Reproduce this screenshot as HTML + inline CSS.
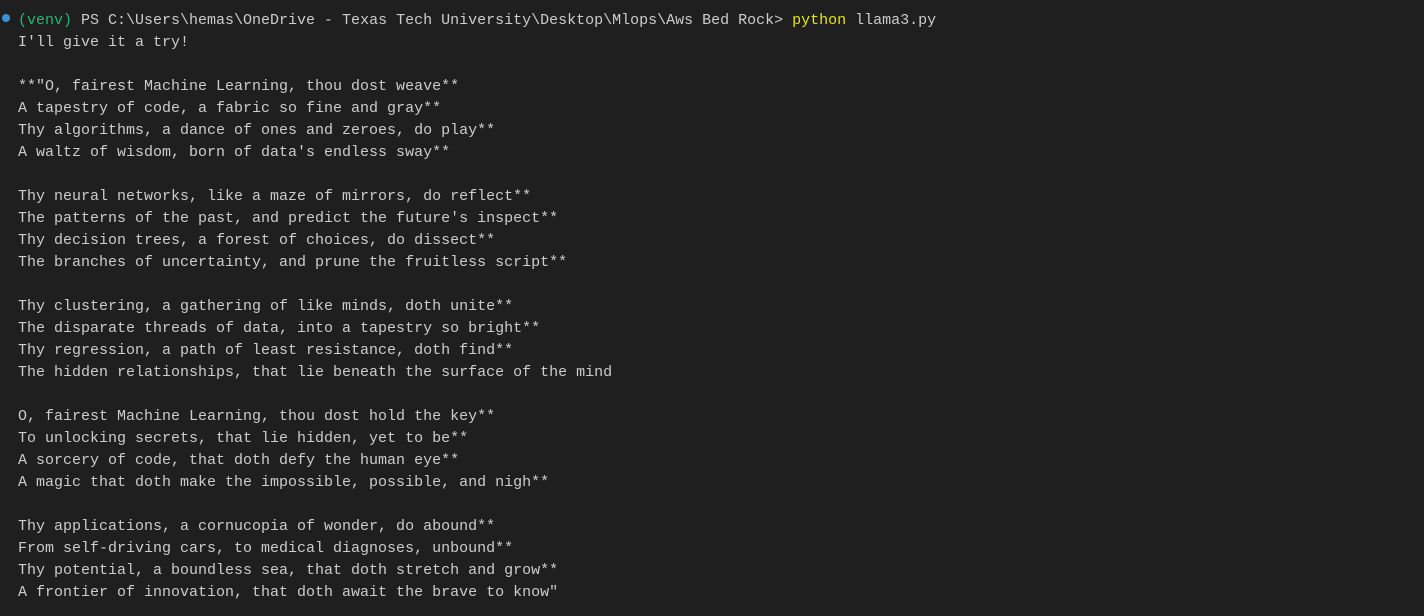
<!DOCTYPE html>
<html><head><meta charset="utf-8"><style>
html,body{margin:0;padding:0;background:#1f1f1f;width:1424px;height:616px;overflow:hidden}
pre{margin:0;position:absolute;left:18px;top:10px;font-family:"Liberation Mono",monospace;font-size:15px;line-height:22px;color:#cccccc;white-space:pre}
.g{color:#23b86f}.y{color:#e5e510}
.dot{position:absolute;left:2px;top:14px;width:8px;height:8px;border-radius:50%;background:#3794d8}
</style></head><body>
<div class="dot"></div>
<pre><span class="g">(venv)</span> PS C:\Users\hemas\OneDrive - Texas Tech University\Desktop\Mlops\Aws Bed Rock&gt; <span class="y">python</span> llama3.py
I'll give it a try!

**"O, fairest Machine Learning, thou dost weave**
A tapestry of code, a fabric so fine and gray**
Thy algorithms, a dance of ones and zeroes, do play**
A waltz of wisdom, born of data's endless sway**

Thy neural networks, like a maze of mirrors, do reflect**
The patterns of the past, and predict the future's inspect**
Thy decision trees, a forest of choices, do dissect**
The branches of uncertainty, and prune the fruitless script**

Thy clustering, a gathering of like minds, doth unite**
The disparate threads of data, into a tapestry so bright**
Thy regression, a path of least resistance, doth find**
The hidden relationships, that lie beneath the surface of the mind

O, fairest Machine Learning, thou dost hold the key**
To unlocking secrets, that lie hidden, yet to be**
A sorcery of code, that doth defy the human eye**
A magic that doth make the impossible, possible, and nigh**

Thy applications, a cornucopia of wonder, do abound**
From self-driving cars, to medical diagnoses, unbound**
Thy potential, a boundless sea, that doth stretch and grow**
A frontier of innovation, that doth await the brave to know"</pre>
</body></html>
